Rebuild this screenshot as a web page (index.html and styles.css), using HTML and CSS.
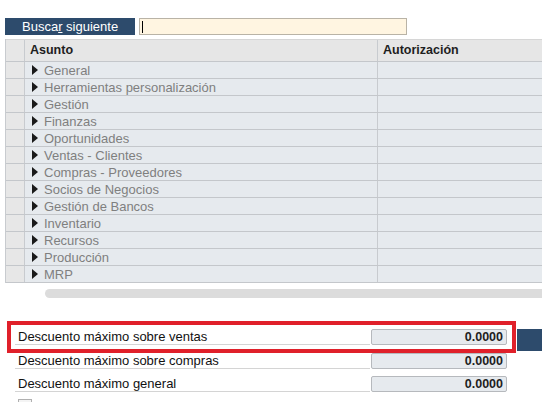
FILE: index.html
```html
<!DOCTYPE html>
<html lang="es">
<head>
    <meta charset="UTF-8">
    <meta name="viewport" content="width=device-width, initial-scale=1.0">
    <title>Autorizaciones</title>
    <link rel="stylesheet" href="styles.css">
</head>
<body>

<div class="toolbar">
    <button class="btn-buscar">Busca<u>r</u> siguiente</button>
    <div class="campo-buscar"><span class="cursor"></span></div>
</div>

<div class="tabla">
    <div class="fila cabecera">
        <div class="gutter"></div>
        <div class="celda">Asunto</div>
        <div class="celda">Autorización</div>
    </div>
    <div class="fila"><div class="gutter"></div><div class="celda"><span class="flecha"></span>General</div><div class="celda"></div></div>
    <div class="fila"><div class="gutter"></div><div class="celda"><span class="flecha"></span>Herramientas personalización</div><div class="celda"></div></div>
    <div class="fila"><div class="gutter"></div><div class="celda"><span class="flecha"></span>Gestión</div><div class="celda"></div></div>
    <div class="fila"><div class="gutter"></div><div class="celda"><span class="flecha"></span>Finanzas</div><div class="celda"></div></div>
    <div class="fila"><div class="gutter"></div><div class="celda"><span class="flecha"></span>Oportunidades</div><div class="celda"></div></div>
    <div class="fila"><div class="gutter"></div><div class="celda"><span class="flecha"></span>Ventas - Clientes</div><div class="celda"></div></div>
    <div class="fila"><div class="gutter"></div><div class="celda"><span class="flecha"></span>Compras - Proveedores</div><div class="celda"></div></div>
    <div class="fila"><div class="gutter"></div><div class="celda"><span class="flecha"></span>Socios de Negocios</div><div class="celda"></div></div>
    <div class="fila"><div class="gutter"></div><div class="celda"><span class="flecha"></span>Gestión de Bancos</div><div class="celda"></div></div>
    <div class="fila"><div class="gutter"></div><div class="celda"><span class="flecha"></span>Inventario</div><div class="celda"></div></div>
    <div class="fila"><div class="gutter"></div><div class="celda"><span class="flecha"></span>Recursos</div><div class="celda"></div></div>
    <div class="fila"><div class="gutter"></div><div class="celda"><span class="flecha"></span>Producción</div><div class="celda"></div></div>
    <div class="fila"><div class="gutter"></div><div class="celda"><span class="flecha"></span>MRP</div><div class="celda"></div></div>
</div>

<div class="scroll"></div>

<div class="descuentos">
    <div class="linea-principal">
        <div class="resaltado">
            <div class="campo">
                <div class="etiqueta">Descuento máximo sobre ventas</div>
                <div class="valor">0.0000</div>
            </div>
        </div>
        <div class="bloque"></div>
    </div>
    <div class="campo suelto">
        <div class="etiqueta">Descuento máximo sobre compras</div>
        <div class="valor">0.0000</div>
    </div>
    <div class="campo suelto separado">
        <div class="etiqueta">Descuento máximo general</div>
        <div class="valor">0.0000</div>
    </div>
    <div class="check"></div>
</div>

</body>
</html>
```

FILE: styles.css
```css
body {
    font-family: "Liberation Sans", Arial, sans-serif;
    margin: 0;
    padding: 0;
    background-color: #ffffff;
    color: #1a1a1a;
    width: 542px;
    overflow: hidden;
}

.toolbar {
    display: flex;
    align-items: center;
    padding: 18px 0 0 5px;
    gap: 4px;
}

.btn-buscar {
    width: 130px;
    height: 17px;
    padding: 0 0 0 17px;
    text-align: left;
    background-color: #2d4b6c;
    color: #ffffff;
    border: none;
    font-family: "Liberation Sans", Arial, sans-serif;
    font-size: 13px;
    line-height: 17px;
}

.campo-buscar {
    width: 264px;
    height: 15px;
    background-color: #fff5e1;
    border: 1px solid #b9b3a6;
    display: flex;
    align-items: center;
    padding-left: 2px;
}

.cursor {
    width: 1px;
    height: 12px;
    background-color: #000000;
}

.tabla {
    margin: 4px 0 0 5px;
    border-left: 1px solid #c8cbcf;
}

.fila {
    display: grid;
    grid-template-columns: 19px 353px 1fr;
    height: 16px;
    border-bottom: 1px solid #c4c7cb;
    background-color: #e6eaee;
    font-size: 13px;
    color: #7f7f7f;
}

.fila .gutter {
    background-color: #e7e7e7;
    border-right: 1px solid #c8cbcf;
}

.fila .celda {
    display: flex;
    align-items: center;
    padding: 1px 0 0 7px;
    border-right: 1px solid #c8cbcf;
}

.fila .celda:last-child {
    border-right: none;
}

.cabecera {
    height: 21px;
    border-top: 1px solid #d6d6d6;
    background-color: #e6e6e6;
    color: #1e1e1e;
    font-size: 12.5px;
    font-weight: bold;
}

.cabecera .celda {
    padding: 0 0 2px 5px;
}

.flecha {
    width: 0;
    height: 0;
    border-top: 5px solid transparent;
    border-bottom: 5px solid transparent;
    border-left: 6px solid #1a1a1a;
    margin: -1px 6px 0 0;
}

.scroll {
    margin: 6px 0 0 45px;
    height: 9px;
    background-color: #dcdcdc;
    border-radius: 5px 0 0 5px;
}

.descuentos {
    margin-top: 23px;
    padding-left: 7px;
}

.linea-principal {
    display: flex;
    align-items: flex-start;
}

.resaltado {
    width: 497px;
    border: 4px solid #e0202a;
    padding: 4px 0 4px 4px;
}

.bloque {
    width: 25px;
    height: 22px;
    margin: 8px 0 0 1px;
    background-color: #2d4b6c;
}

.campo {
    display: flex;
    align-items: flex-end;
    height: 16px;
}

.suelto {
    padding-left: 8px;
}

.separado {
    margin-top: 7px;
}

.etiqueta {
    width: 352px;
    padding-left: 3px;
    border-bottom: 1px solid #d4d4d4;
    font-size: 13px;
    line-height: 15px;
    color: #111111;
    white-space: nowrap;
}

.valor {
    width: 131px;
    height: 14px;
    margin-left: 1px;
    padding-right: 3px;
    background-color: #e6eaee;
    border: 1px solid #b6b9bd;
    border-radius: 2px;
    text-align: right;
    font-size: 12.5px;
    font-weight: bold;
    line-height: 14px;
    color: #1e1e1e;
}

.check {
    width: 12px;
    height: 12px;
    margin: 7px 0 0 11px;
    border: 1px solid #b0b0b0;
    background-color: #f4f4f4;
}
```
